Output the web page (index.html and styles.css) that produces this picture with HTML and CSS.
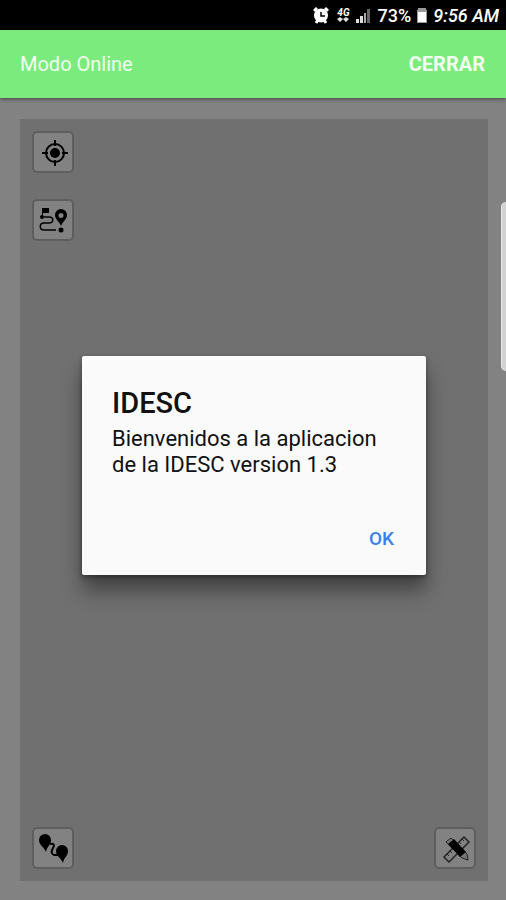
FILE: index.html
```html
<!DOCTYPE html>
<html lang="es">
<head>
    <meta charset="UTF-8">
    <meta name="viewport" content="width=device-width, initial-scale=1.0">
    <title>Modo Online</title>
    <link rel="stylesheet" href="styles.css">
</head>
<body>
    <div class="status-bar">
        <svg class="status-icon" width="16" height="17" viewBox="0 0 16 17">
            <path d="M1 4l3-3M15 4l-3-3M3 16l2-3M13 16l-2-3" stroke="#fff" stroke-width="3"/>
            <circle cx="8" cy="8.5" r="7" fill="#fff"/>
            <path d="M8 5v4h4" fill="none" stroke="#000" stroke-width="1.5"/>
        </svg>
        <span class="network">
            <span>4G</span>
            <svg width="12" height="5" viewBox="0 0 12 5">
                <path d="M0 2l3-2 3 2-3 3zM6 2l3-2 3 2-3 3z" fill="#ddd"/>
            </svg>
        </span>
        <svg class="status-icon" width="14" height="15" viewBox="0 0 14 15">
            <path d="M0 11h3v4H0zM4 8h3v7H4z" fill="#ddd"/>
            <path d="M8 5h2v10H8z" fill="#aaa"/>
            <path d="M11 1h3v14h-3z" fill="#666"/>
        </svg>
        <span class="battery-level">73%</span>
        <svg class="status-icon" width="10" height="15" viewBox="0 0 10 15">
            <path d="M1 0h8v2h1v13H0V2h1z" fill="#999"/>
            <path d="M1 4h8v10H1z" fill="#fff"/>
        </svg>
        <time class="clock">9:56 AM</time>
    </div>

    <div class="app">
        <header class="toolbar">
            <h1 class="toolbar-title">Modo Online</h1>
            <button class="toolbar-close" type="button">CERRAR</button>
        </header>

        <main class="content">
            <div class="map">
                <div class="map-tools">
                    <button class="map-button" type="button" aria-label="Mi ubicación">
                        <svg width="32" height="32" viewBox="-3 -2 32 32">
                            <circle cx="14" cy="14" r="9" fill="none" stroke="#000" stroke-width="2"/>
                            <circle cx="14" cy="14" r="5"/>
                            <path d="M14 1v6M14 21v6M1 14h6M21 14h6" stroke="#000" stroke-width="2"/>
                        </svg>
                    </button>
                    <button class="map-button" type="button" aria-label="Ruta">
                        <svg width="30" height="28" viewBox="0 0 30 28">
                            <path d="M3 1h7v5H4v4H3z"/>
                            <circle cx="3" cy="10" r="2"/>
                            <path d="M5 10h5c5 0 5 6 0 6H5c-5 0-5 7 0 7h12" fill="none" stroke="#000" stroke-width="1.5"/>
                            <circle cx="22" cy="23" r="2.5"/>
                            <path fill-rule="evenodd" d="M22 2a6 6 0 0 1 6 6c0 4-4 6-6 11-2-5-6-7-6-11a6 6 0 0 1 6-6zm0 4a2.500 2.500 0 1 0 0 5 2.500 2.500 0 0 0 0-5z"/>
                        </svg>
                    </button>
                </div>
                <div class="map-tools map-tools-bottom">
                    <button class="map-button" type="button" aria-label="Puntos de interés">
                        <svg width="30" height="30" viewBox="0 0 30 30">
                            <path d="M6 0a6 6 0 0 1 6 6c0 5-4 6-5 12-2-5-7-7-7-12a6 6 0 0 1 6-6zM23 11a6 6 0 0 1 6 6c0 5-4 6-5 12-2-5-7-7-7-12a6 6 0 0 1 6-6z"/>
                            <path d="M11 10c4-1 5 1 3 4s-2 6 1 7h4" fill="none" stroke="#000" stroke-width="2"/>
                        </svg>
                    </button>
                    <button class="map-button" type="button" aria-label="Medir">
                        <svg width="30" height="30" viewBox="0 0 30 30">
                            <path d="M3 23L23 3l5 5L8 28z" fill="none" stroke="#222" stroke-width="1.5"/>
                            <path d="M6 20l2 2M9 17l2 2M18 8l2 2M21 5l2 2" stroke="#222"/>
                            <path d="M5 8l5-4 16 16 1 6-6-2z" fill="#777" stroke="#222"/>
                            <path d="M7 10l6-5 12 13-6 5z"/>
                        </svg>
                    </button>
                </div>
            </div>
        </main>

        <div class="edge-handle"></div>

        <div class="overlay">
            <section class="dialog" role="dialog" aria-labelledby="dialog-title">
                <h2 class="dialog-title" id="dialog-title">IDESC</h2>
                <p class="dialog-message">Bienvenidos a la aplicacion de la IDESC version 1.3</p>
                <div class="dialog-actions">
                    <button class="dialog-button" type="button">OK</button>
                </div>
            </section>
        </div>
    </div>
</body>
</html>
```

FILE: styles.css
```css
* {
    box-sizing: border-box;
}

body {
    margin: 0;
    min-height: 100vh;
    display: flex;
    flex-direction: column;
    font-family: Roboto, "Liberation Sans", sans-serif;
    background-color: #828282;
}

h1, h2, p {
    margin: 0;
}

button {
    padding: 0;
    border: none;
    background: none;
    font-family: inherit;
    cursor: pointer;
}

svg {
    display: block;
}

.status-bar {
    display: flex;
    align-items: center;
    justify-content: flex-end;
    height: 30px;
    padding: 0 7px;
    background-color: #000;
    color: #fff;
    font-size: 18px;
}

.status-icon {
    flex: none;
}

.network {
    margin: 0 6px 0 8px;
    font-size: 10px;
    font-style: italic;
    font-weight: 700;
    line-height: 9px;
}

.battery-level {
    margin: 0 6px 0 8px;
    font-weight: 500;
}

.clock {
    margin-left: 6px;
    font-style: italic;
    font-weight: 500;
}

.app {
    position: relative;
    flex: 1;
    display: flex;
    flex-direction: column;
}

.toolbar {
    display: flex;
    align-items: center;
    justify-content: space-between;
    height: 68px;
    padding: 0 21px 0 20px;
    background-color: #7ceb7e;
    box-shadow: 0 1px 4px rgba(0, 0, 0, 0.5);
    color: #f0fff0;
}

.toolbar-title {
    font-size: 20px;
    font-weight: 400;
}

.toolbar-close {
    color: inherit;
    font-size: 20px;
    font-weight: 700;
}

.content {
    flex: 1;
    display: flex;
    padding: 21px 18px 19px 20px;
}

.map {
    flex: 1;
    display: flex;
    flex-direction: column;
    justify-content: space-between;
    padding: 12px;
    background-color: #707070;
}

.map-tools {
    display: flex;
    flex-direction: column;
    gap: 26px;
}

.map-tools-bottom {
    flex-direction: row;
    justify-content: space-between;
}

.map-button {
    display: flex;
    align-items: center;
    justify-content: center;
    width: 42px;
    height: 42px;
    padding: 2px 0 0 2px;
    border: 2px solid #5e5e5e;
    border-radius: 5px;
    background-color: #828282;
}

.edge-handle {
    position: absolute;
    top: 172px;
    right: 0;
    width: 5px;
    height: 169px;
    border-left: 1px solid #e8e8e8;
    border-radius: 5px 0 0 5px;
    background-color: #d2d2d2;
}

.overlay {
    position: absolute;
    inset: 0;
    display: flex;
    align-items: center;
    padding: 0 80px 0 82px;
}

.dialog {
    flex: 1;
    padding: 30px 30px 24px;
    border-radius: 2px;
    background-color: #fafafa;
    box-shadow: 0 16px 20px rgba(0, 0, 0, 0.4), 0 2px 5px rgba(0, 0, 0, 0.4);
    color: #111;
}

.dialog-title {
    font-size: 29px;
    font-weight: 500;
    line-height: 34px;
}

.dialog-message {
    margin-top: 6px;
    padding-right: 12px;
    font-size: 22px;
    line-height: 26px;
}

.dialog-actions {
    display: flex;
    justify-content: flex-end;
    margin-top: 49px;
}

.dialog-button {
    padding: 0 2px;
    color: #3880f0;
    font-size: 19px;
    font-weight: 500;
    line-height: 24px;
}
```
